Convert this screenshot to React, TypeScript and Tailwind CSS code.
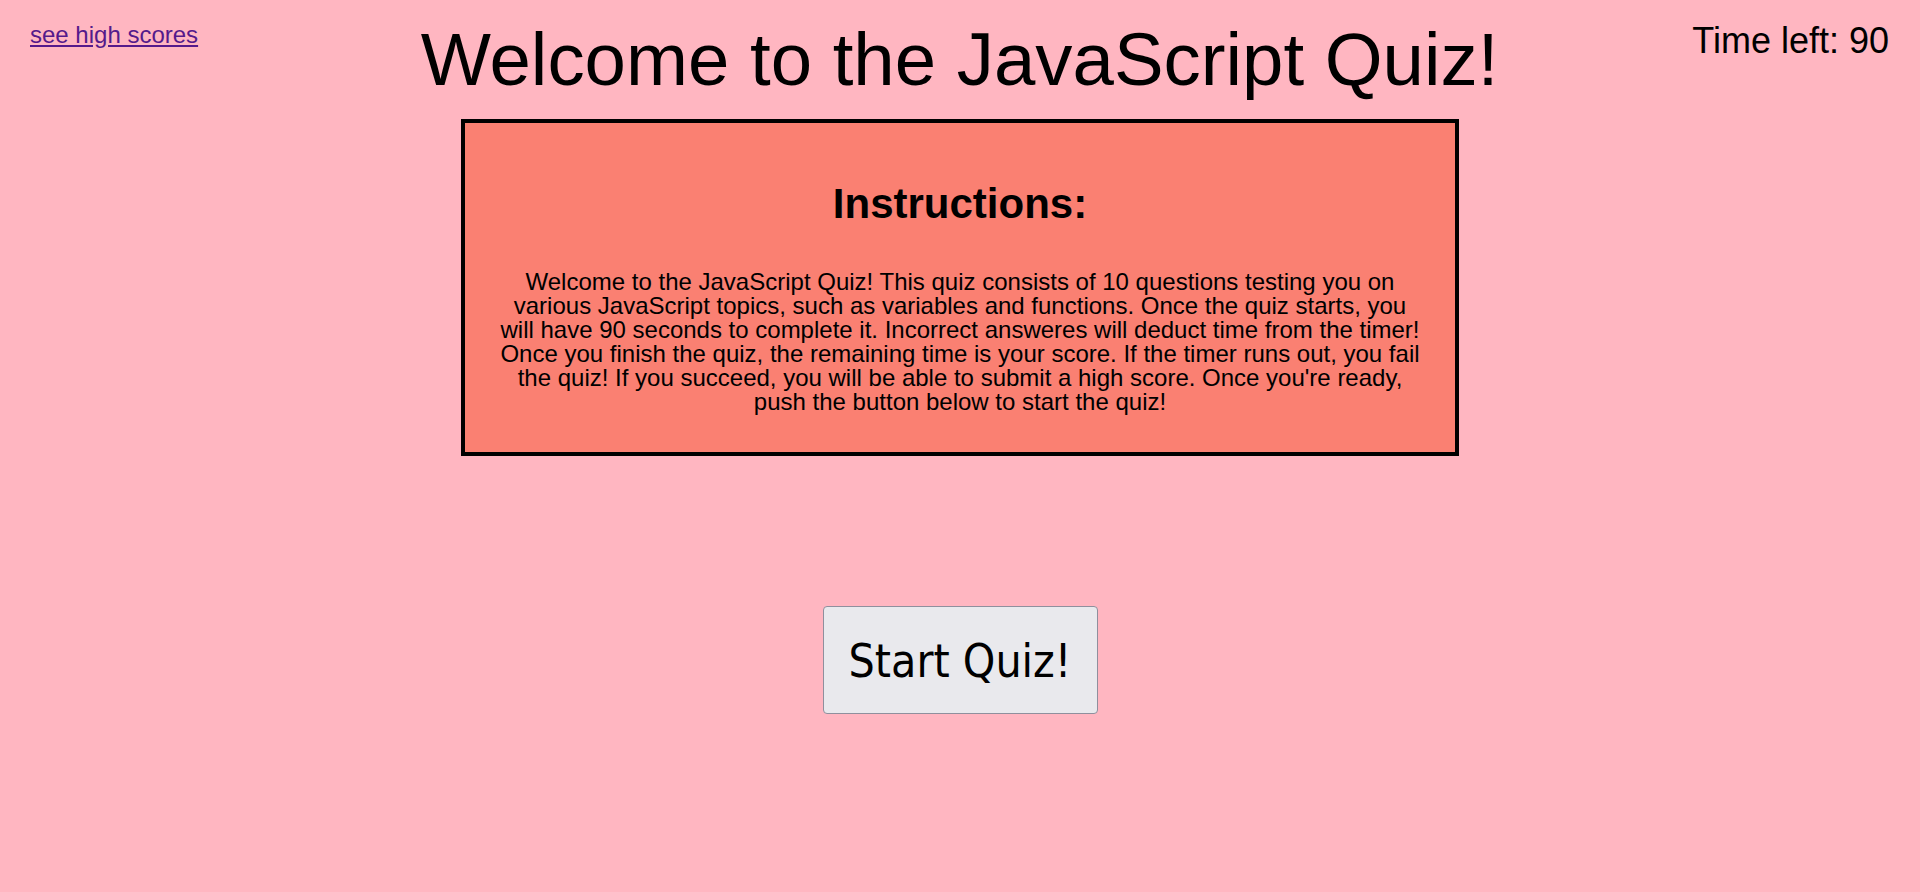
import React from "react";

const instructions =
  "Welcome to the JavaScript Quiz! This quiz consists of 10 questions testing you on various JavaScript topics, such as variables and functions. Once the quiz starts, you will have 90 seconds to complete it. Incorrect answeres will deduct time from the timer! Once you finish the quiz, the remaining time is your score. If the timer runs out, you fail the quiz! If you succeed, you will be able to submit a high score. Once you're ready, push the button below to start the quiz!";

export default function App() {
  return (
    <div className="min-h-screen bg-[#ffb6c1] text-black font-['Liberation_Sans',Arial,sans-serif]">
      <header className="grid grid-cols-[1fr_auto_1fr] items-start pt-[23px] pl-[30px] pr-[31px]">
        <a href="#" className="justify-self-start text-[24px] leading-[24px] text-[#551a8b] underline">
          see high scores
        </a>
        <h1 className="text-[74.4px] leading-[74px] font-normal">Welcome to the JavaScript Quiz!</h1>
        <div className="justify-self-end text-[36px] leading-[35px]">Time left: 90</div>
      </header>

      <section className="mx-auto mt-[22px] w-[998px] border-4 border-black bg-[#fa8072] px-8 pt-[57px] pb-[38px] text-center">
        <h2 className="text-[42px] leading-[47px] font-bold">Instructions:</h2>
        <p className="mt-[43px] text-[24px] leading-[24px]">{instructions}</p>
      </section>

      <div className="flex justify-center mt-[150px]">
        <button className="flex h-[108px] w-[275px] items-center justify-center rounded-[4px] border border-[#8f8f9d] bg-[#e9e9ed] pt-[3px] text-[46px] font-['DejaVu_Sans_Condensed','DejaVu_Sans',sans-serif]">
          Start Quiz!
        </button>
      </div>
    </div>
  );
}
